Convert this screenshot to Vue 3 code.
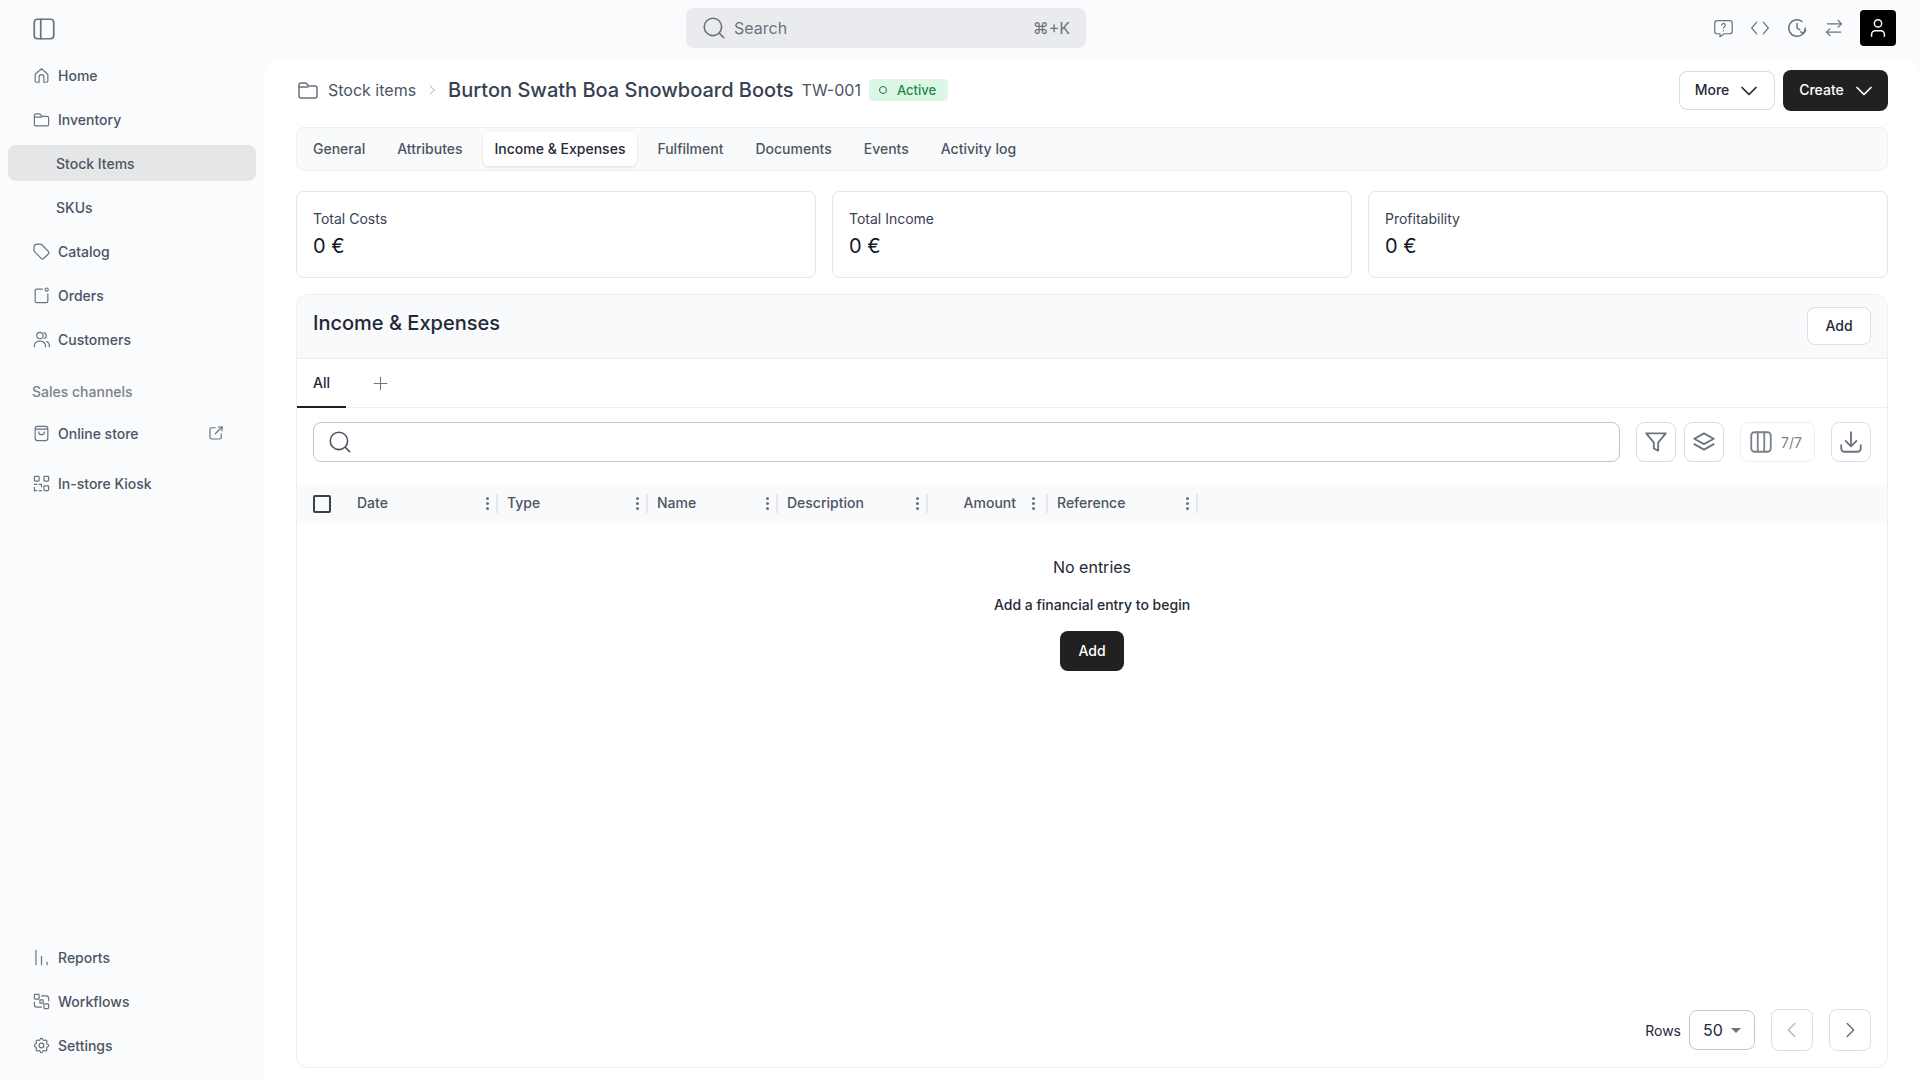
<script setup>
import { h } from 'vue'

// 線アイコンのパス定義 (viewBox 24)
const icons = {
  panel: ['M6 3h12a3 3 0 0 1 3 3v12a3 3 0 0 1-3 3H6a3 3 0 0 1-3-3V6a3 3 0 0 1 3-3z', 'M9 3v18'],
  home: ['M4 10.5 12 3.5l8 7V19a1.5 1.5 0 0 1-1.5 1.5H15V14a3 3 0 0 0-6 0v6.5H5.5A1.5 1.5 0 0 1 4 19z'],
  folder: ['M3 7a2 2 0 0 1 2-2h4.2a2 2 0 0 1 1.5.7L12.5 8H19a2 2 0 0 1 2 2v8a2 2 0 0 1-2 2H5a2 2 0 0 1-2-2z', 'M3 9h9'],
  tag: ['M2.5 6.5v4.2a2 2 0 0 0 .6 1.4l8.8 8.8a2 2 0 0 0 2.8 0l6.1-6.1a2 2 0 0 0 0-2.8L12 3.2a2 2 0 0 0-1.4-.6H6.4a4 4 0 0 0-3.9 3.9z'],
  orders: ['M13 4H6a2 2 0 0 0-2 2v13a2 2 0 0 0 2 2h12a2 2 0 0 0 2-2v-9', 'M18.5 2.5a2 2 0 1 1 0 4 2 2 0 0 1 0-4z'],
  users: ['M10 3a4 4 0 1 1 0 8 4 4 0 0 1 0-8z', 'M3 21v-1a6 6 0 0 1 6-6h2a6 6 0 0 1 6 6v1', 'M15.5 3.3a4 4 0 0 1 0 7.4', 'M22 21v-1a6 6 0 0 0-3.5-5.4'],
  bag: ['M7 3h10a3 3 0 0 1 3 3v12a3 3 0 0 1-3 3H7a3 3 0 0 1-3-3V6a3 3 0 0 1 3-3z', 'M4.5 6.5h15', 'M8.5 10a3.5 3.5 0 0 0 7 0'],
  external: ['M11 5H6a2 2 0 0 0-2 2v11a2 2 0 0 0 2 2h11a2 2 0 0 0 2-2v-5', 'M11 13 20 4', 'M15 4h5v5'],
  qr: ['M4 3h4a1 1 0 0 1 1 1v4a1 1 0 0 1-1 1H4a1 1 0 0 1-1-1V4a1 1 0 0 1 1-1z', 'M16 3h4a1 1 0 0 1 1 1v4a1 1 0 0 1-1 1h-4a1 1 0 0 1-1-1V4a1 1 0 0 1 1-1z', 'M16 15h4a1 1 0 0 1 1 1v4a1 1 0 0 1-1 1h-4a1 1 0 0 1-1-1v-4a1 1 0 0 1 1-1z', 'M3 13h3', 'M9 13h3v3', 'M3 17v4h3', 'M9 21h3'],
  reports: ['M5 3v18', 'M12 11v10', 'M19 18v3'],
  flows: ['M4 3h4a1 1 0 0 1 1 1v4a1 1 0 0 1-1 1H4a1 1 0 0 1-1-1V4a1 1 0 0 1 1-1z', 'M10 10h4v4h-4z', 'M16 15h4a1 1 0 0 1 1 1v4a1 1 0 0 1-1 1h-4a1 1 0 0 1-1-1v-4a1 1 0 0 1 1-1z', 'M12 5h6a3 3 0 0 1 3 3v3', 'M12 19H6a3 3 0 0 1-3-3v-3'],
  gear: ['M10.325 4.317c.426-1.756 2.924-1.756 3.35 0a1.724 1.724 0 0 0 2.573 1.066c1.543-.94 3.31.826 2.37 2.37a1.724 1.724 0 0 0 1.065 2.572c1.756.426 1.756 2.924 0 3.35a1.724 1.724 0 0 0-1.066 2.573c.94 1.543-.826 3.31-2.37 2.37a1.724 1.724 0 0 0-2.572 1.065c-.426 1.756-2.924 1.756-3.35 0a1.724 1.724 0 0 0-2.573-1.066c-1.543.94-3.31-.826-2.37-2.37a1.724 1.724 0 0 0-1.065-2.572c-1.756-.426-1.756-2.924 0-3.35a1.724 1.724 0 0 0 1.066-2.573c-.94-1.543.826-3.31 2.37-2.37 1 .608 2.296.07 2.572-1.065z', 'M12 9a3 3 0 1 1 0 6 3 3 0 0 1 0-6z'],
  search: ['M11 3a8 8 0 1 1 0 16 8 8 0 0 1 0-16z', 'M17 17l4 4'],
  help: ['M5 3h14a3 3 0 0 1 3 3v9a3 3 0 0 1-3 3h-6l-5 3.5V18H5a3 3 0 0 1-3-3V6a3 3 0 0 1 3-3z', 'M10 8.2a2 2 0 1 1 3 1.8c-.7.4-1 .8-1 1.5', 'M12 14.5v.1'],
  code: ['M8 5 2 12l6 7', 'M16 5l6 7-6 7'],
  clock: ['M21 12a9 9 0 1 1-3.5-7.1', 'M12 7v5l3 2', 'M21.5 14.5 19 18l-3-1.8'],
  swap: ['M21 7H4', 'M17 3l4 4-4 4', 'M3 17h17', 'M7 13l-4 4 4 4'],
  user: ['M12 3a4 4 0 1 1 0 8 4 4 0 0 1 0-8z', 'M5 21v-2a4 4 0 0 1 4-4h6a4 4 0 0 1 4 4v2'],
  down: ['M5 8.5l7 7 7-7'],
  right: ['M9 5l7 7-7 7'],
  left: ['M15 5l-7 7 7 7'],
  plus: ['M12 4v16', 'M4 12h16'],
  filter: ['M3 4h18l-7 8.5V20l-4-2v-5.5z'],
  layers: ['M12 4l9 5-9 5-9-5z', 'M3 14l9 5 9-5'],
  columns: ['M6 3h12a3 3 0 0 1 3 3v12a3 3 0 0 1-3 3H6a3 3 0 0 1-3-3V6a3 3 0 0 1 3-3z', 'M9 3v18', 'M15 3v18'],
  download: ['M3 15v3a3 3 0 0 0 3 3h12a3 3 0 0 0 3-3v-3', 'M12 3v12', 'M7 11l5 5 5-5'],
}

// アイコン描画用の小さな関数コンポーネント
const Icon = (props) =>
  h('svg', {
    width: props.size || 16,
    height: props.size || 16,
    viewBox: '0 0 24 24',
    fill: 'none',
    stroke: 'currentColor',
    'stroke-width': props.sw || 1.6,
    'stroke-linecap': 'round',
    'stroke-linejoin': 'round',
  }, icons[props.name].map((d) => h('path', { d })))
Icon.props = ['name', 'size', 'sw']

const mainNav = [
  { label: 'Home', icon: 'home' },
  { label: 'Inventory', icon: 'folder' },
  { label: 'Stock Items', sub: true, active: true },
  { label: 'SKUs', sub: true },
  { label: 'Catalog', icon: 'tag' },
  { label: 'Orders', icon: 'orders' },
  { label: 'Customers', icon: 'users' },
]
const bottomNav = [
  { label: 'Reports', icon: 'reports' },
  { label: 'Workflows', icon: 'flows' },
  { label: 'Settings', icon: 'gear' },
]
const tabs = ['General', 'Attributes', 'Income & Expenses', 'Fulfilment', 'Documents', 'Events', 'Activity log']
const stats = ['Total Costs', 'Total Income', 'Profitability']
const columns = [
  { label: 'Date', width: 150 },
  { label: 'Type', width: 150 },
  { label: 'Name', width: 130 },
  { label: 'Description', width: 150 },
  { label: 'Amount', width: 120, right: true },
  { label: 'Reference', width: 150 },
]
</script>

<template>
  <div class="app">
    <aside class="sidebar">
      <div class="toggle"><Icon name="panel" :size="26" /></div>
      <nav class="nav">
        <a v-for="item in mainNav" :key="item.label" class="nav-item" :class="{ sub: item.sub, active: item.active }">
          <Icon v-if="item.icon" :name="item.icon" :size="19" :sw="1.5" />
          <span>{{ item.label }}</span>
        </a>
      </nav>
      <div class="nav-title">Sales channels</div>
      <a class="nav-item">
        <Icon name="bag" :size="19" :sw="1.5" />
        <span>Online store</span>
        <Icon class="ext" name="external" :size="18" />
      </a>
      <a class="nav-item kiosk">
        <Icon name="qr" :size="19" :sw="1.5" />
        <span>In-store Kiosk</span>
      </a>
      <nav class="nav bottom">
        <a v-for="item in bottomNav" :key="item.label" class="nav-item">
          <Icon :name="item.icon" :size="19" :sw="1.5" />
          <span>{{ item.label }}</span>
        </a>
      </nav>
    </aside>

    <div class="main">
      <header class="topbar">
        <div class="global-search">
          <Icon name="search" :size="26" :sw="1.5" />
          <span class="gs-text">Search</span>
          <span class="gs-key">⌘+K</span>
        </div>
        <div class="top-actions">
          <Icon name="help" :size="21" :sw="1.4" />
          <Icon name="code" :size="20" :sw="1.4" />
          <Icon name="clock" :size="22" :sw="1.6" />
          <Icon name="swap" :size="20" :sw="1.5" />
          <div class="avatar"><Icon name="user" :size="22" /></div>
        </div>
      </header>

      <main class="panel">
        <div class="page-head">
          <Icon class="crumb-icon" name="folder" :size="24" :sw="1.5" />
          <span class="crumb">Stock items</span>
          <Icon class="crumb-sep" name="right" :size="14" />
          <h1 class="title">Burton Swath Boa Snowboard Boots</h1>
          <span class="code">TW-001</span>
          <span class="badge"><i class="dot"></i>Active</span>
          <div class="head-btns">
            <button class="btn more">More <Icon name="down" :size="24" :sw="1.7" /></button>
            <button class="btn create">Create <Icon name="down" :size="24" :sw="1.7" /></button>
          </div>
        </div>

        <div class="tabs">
          <span v-for="t in tabs" :key="t" class="tab" :class="{ on: t === 'Income & Expenses' }">{{ t }}</span>
        </div>

        <div class="stats">
          <div v-for="s in stats" :key="s" class="stat">
            <div class="stat-label">{{ s }}</div>
            <div class="stat-value">0 €</div>
          </div>
        </div>

        <section class="card">
          <div class="card-head">
            <h2>Income &amp; Expenses</h2>
            <button class="btn add-out">Add</button>
          </div>
          <div class="view-tabs">
            <span class="view on">All</span>
            <Icon class="view-plus" name="plus" :size="19" :sw="1.3" />
          </div>
          <div class="toolbar">
            <div class="tool-search"><Icon name="search" :size="26" :sw="1.5" /></div>
            <button class="tool first"><Icon name="filter" :size="26" :sw="1.7" /></button>
            <button class="tool"><Icon name="layers" :size="26" :sw="1.7" /></button>
            <button class="tool cols"><Icon name="columns" :size="26" :sw="1.7" /><span>7/7</span></button>
            <button class="tool"><Icon name="download" :size="26" :sw="1.7" /></button>
          </div>

          <div class="thead">
            <div class="check-col"><span class="check"></span></div>
            <div
              v-for="c in columns"
              :key="c.label"
              class="th"
              :class="{ right: c.right }"
              :style="{ width: c.width + 'px' }"
            >
              <span class="th-label">{{ c.label }}</span>
              <span class="kebab"><i></i><i></i><i></i></span>
            </div>
          </div>

          <div class="empty">
            <div class="empty-title">No entries</div>
            <div class="empty-sub">Add a financial entry to begin</div>
            <button class="btn add-solid">Add</button>
          </div>

          <div class="pager">
            <span class="rows">Rows</span>
            <div class="select">50<i class="caret"></i></div>
            <button class="page-btn off"><Icon name="left" :size="22" /></button>
            <button class="page-btn"><Icon name="right" :size="22" /></button>
          </div>
        </section>
      </main>
    </div>
  </div>
</template>

<style>
html, body {
  margin: 0;
  background: #f9fbfd;
}
</style>

<style scoped>
.app {
  display: flex;
  height: 1080px;
  overflow: hidden;
  font-family: Inter, "Noto Sans", "DejaVu Sans", sans-serif;
  font-size: 14px;
  color: #1f2937;
  background: #f9fbfd;
}
button {
  font-family: inherit;
  cursor: pointer;
}

/* サイドバー */
.sidebar {
  width: 264px;
  flex: none;
  display: flex;
  flex-direction: column;
  box-sizing: border-box;
  padding: 0 8px 17px;
  color: #4b5563;
}
.toggle {
  height: 57px;
  display: flex;
  align-items: center;
  padding-left: 23px;
  color: #6b7280;
}
.nav {
  display: flex;
  flex-direction: column;
  gap: 8px;
}
.nav.bottom {
  margin-top: auto;
}
.nav-item {
  height: 36px;
  display: flex;
  align-items: center;
  gap: 7px;
  padding-left: 24px;
  border-radius: 8px;
  font-weight: 500;
  font-size: 14px;
  box-sizing: border-box;
}
.nav-item svg {
  color: #6b7280;
  flex: none;
}
.nav-item.sub {
  padding-left: 48px;
}
.nav-item.active {
  background: #e5e6e7;
}
.nav-item .ext {
  margin-left: auto;
  margin-right: 31px;
}
.kiosk {
  margin-top: 14px;
}
.nav-title {
  margin: 25px 0 13px 24px;
  height: 20px;
  line-height: 20px;
  color: #7b818c;
  font-weight: 500;
}

/* トップバー */
.main {
  flex: 1;
  min-width: 0;
  display: flex;
  flex-direction: column;
}
.topbar {
  height: 58px;
  flex: none;
  display: flex;
  align-items: flex-start;
  justify-content: space-between;
  box-sizing: border-box;
  padding: 8px 24px 0 422px;
}
.global-search {
  width: 400px;
  height: 40px;
  display: flex;
  align-items: center;
  box-sizing: border-box;
  padding: 0 16px 0 15px;
  border-radius: 8px;
  background: #e9ebee;
  color: #6b7280;
  font-size: 16px;
}
.gs-text {
  margin-left: 7px;
}
.gs-key {
  margin-left: auto;
}
.top-actions {
  display: flex;
  align-items: center;
  gap: 16px;
  margin-top: 2px;
  color: #6b7280;
}
.avatar {
  width: 36px;
  height: 36px;
  border-radius: 4px;
  background: #000;
  color: #fff;
  display: flex;
  align-items: center;
  justify-content: center;
}

/* メインパネル */
.panel {
  flex: 1;
  min-height: 0;
  display: flex;
  flex-direction: column;
  background: #fff;
  border-radius: 16px 16px 0 0;
  padding: 12px 32px;
  box-sizing: border-box;
}
.page-head {
  height: 41px;
  flex: none;
  display: flex;
  align-items: center;
  box-sizing: border-box;
  padding-bottom: 2px;
  font-size: 16px;
}
.crumb-icon {
  color: #6b7280;
}
.crumb {
  margin-left: 8px;
  color: #4b5563;
}
.crumb-sep {
  margin: 0 9px;
  color: #9ca3af;
}
.title {
  margin: 0;
  font-size: 20px;
  font-weight: 500;
  color: #374151;
}
.code {
  margin-left: 8px;
  color: #4b5563;
}
.badge {
  margin-left: 8px;
  height: 22px;
  display: flex;
  align-items: center;
  gap: 10px;
  padding: 0 12px 0 10px;
  border-radius: 4px;
  background: #dcf7e6;
  color: #1c8a47;
  font-size: 13px;
  font-weight: 500;
}
.dot {
  width: 8px;
  height: 8px;
  box-sizing: border-box;
  border: 1.3px solid #15803d;
  border-radius: 50%;
}
.head-btns {
  margin-left: auto;
  margin-bottom: -2px;
  display: flex;
  align-items: center;
  gap: 8px;
}
.btn {
  display: inline-flex;
  align-items: center;
  justify-content: center;
  border-radius: 8px;
  font-size: 14px;
  font-weight: 500;
  padding: 0 0 1px;
}
.more {
  width: 96px;
  height: 39px;
  gap: 8px;
  padding: 0 0 2px 2px;
  background: #fff;
  border: 1px solid #d9dbde;
  color: #1f2937;
}
.create {
  width: 105px;
  height: 41px;
  gap: 8px;
  padding: 0 0 2px 4px;
  background: #212121;
  border: 0;
  color: #fff;
}
.more svg,
.create svg {
  margin-bottom: -2px;
}

.tabs {
  flex: none;
  height: 44px;
  margin-top: 16px;
  display: flex;
  align-items: center;
  gap: 8px;
  padding: 0 4px;
  box-sizing: border-box;
  background: #f9fafb;
  border: 1px solid #eceef0;
  border-radius: 8px;
}
.tab {
  height: 34px;
  line-height: 34px;
  padding: 0 12px;
  border-radius: 6px;
  font-weight: 500;
  color: #4b5563;
}
.tab.on {
  background: #fff;
  color: #1f2937;
  box-shadow: 0 1px 3px rgba(0, 0, 0, 0.12);
}

.stats {
  flex: none;
  margin-top: 20px;
  display: grid;
  grid-template-columns: repeat(3, 1fr);
  gap: 16px;
}
.stat {
  height: 87px;
  box-sizing: border-box;
  padding: 17px 16px 0;
  background: #fff;
  border: 1px solid #e5e7eb;
  border-radius: 8px;
}
.stat-label {
  line-height: 20px;
  color: #374151;
}
.stat-value {
  margin-top: 4px;
  font-size: 20px;
  font-weight: 400;
  line-height: 26px;
  color: #111827;
}

/* テーブルカード */
.card {
  flex: 1;
  min-height: 0;
  margin-top: 16px;
  display: flex;
  flex-direction: column;
  border: 1px solid #eceef0;
  border-radius: 12px;
  overflow: hidden;
}
.card-head {
  flex: none;
  height: 64px;
  display: flex;
  align-items: flex-start;
  justify-content: space-between;
  box-sizing: border-box;
  padding: 12px 16px 0;
  background: #f9fafb;
  border-bottom: 1px solid #eceef0;
}
.card-head h2 {
  margin: 2px 0 0;
  font-size: 20px;
  font-weight: 500;
  line-height: 28px;
  color: #1f2937;
}
.add-out {
  width: 64px;
  height: 38px;
  background: #fff;
  border: 1px solid #dcdee1;
  color: #1f2937;
}
.view-tabs {
  flex: none;
  height: 49px;
  display: flex;
  align-items: stretch;
  box-sizing: border-box;
  border-bottom: 1px solid #eceef0;
}
.view {
  width: 49px;
  box-sizing: border-box;
  padding-left: 16px;
  line-height: 48px;
  font-weight: 500;
  color: #1f2937;
}
.view.on {
  height: 49px;
  border-bottom: 2px solid #1f1f1f;
}
.view-plus {
  margin: 15px 0 0 25px;
  color: #6b7280;
}
.toolbar {
  flex: none;
  display: flex;
  align-items: center;
  gap: 8px;
  padding: 14px 16px 0;
}
.tool-search {
  flex: 1;
  height: 40px;
  display: flex;
  align-items: center;
  box-sizing: border-box;
  padding-left: 13px;
  border: 1px solid #c4c6c9;
  border-radius: 8px;
  color: #4b5563;
}
.tool {
  width: 40px;
  height: 40px;
  flex: none;
  display: flex;
  align-items: center;
  justify-content: center;
  padding: 0;
  background: #fff;
  border: 1px solid #dcdee1;
  border-radius: 8px;
  color: #6b7280;
}
.tool.first {
  margin-left: 8px;
}
.tool.cols {
  width: 75px;
  margin: 0 8px;
  gap: 7px;
  justify-content: flex-start;
  padding-left: 7px;
  border-color: #eceef0;
  font-size: 14px;
  font-weight: 400;
  color: #7b818c;
}
.thead {
  flex: none;
  height: 39px;
  margin-top: 22px;
  display: flex;
  align-items: center;
  background: #f9fafb;
}
.check-col {
  width: 51px;
  flex: none;
  padding-left: 16px;
  box-sizing: border-box;
}
.check {
  display: block;
  width: 18px;
  height: 18px;
  box-sizing: border-box;
  border: 2px solid #374151;
  border-radius: 2px;
}
.th {
  height: 19px;
  flex: none;
  display: flex;
  align-items: center;
  box-sizing: border-box;
  padding: 0 7px 0 9px;
  border-right: 2px solid #e5e7eb;
  color: #4b5563;
  font-weight: 500;
}
.th-label {
  margin-bottom: 2px;
}
.th.right .th-label {
  margin-left: auto;
}
.th.right .kebab {
  margin-left: 16px;
  margin-right: 4px;
}
.kebab {
  margin-left: auto;
  display: flex;
  flex-direction: column;
  gap: 2px;
}
.kebab i {
  display: block;
  width: 3px;
  height: 3px;
  border-radius: 50%;
  background: #6b7280;
}

.empty {
  display: flex;
  flex-direction: column;
  align-items: center;
}
.empty-title {
  margin-top: 32px;
  font-size: 16px;
  line-height: 24px;
  color: #1f2937;
}
.empty-sub {
  margin-top: 16px;
  font-weight: 500;
  line-height: 20px;
  color: #1f2937;
}
.add-solid {
  width: 64px;
  height: 40px;
  margin-top: 16px;
  background: #212121;
  border: 0;
  color: #fff;
}
.pager {
  margin-top: auto;
  display: flex;
  align-items: center;
  justify-content: flex-end;
  height: 42px;
  padding: 0 16px 16px;
}
.rows {
  margin-right: 8px;
  color: #1f2937;
}
.select {
  width: 66px;
  height: 40px;
  box-sizing: border-box;
  display: flex;
  align-items: center;
  padding-left: 13px;
  border: 1px solid #c4c6c9;
  border-radius: 8px;
  font-size: 16px;
  font-weight: 400;
  color: #1f2937;
}
.caret {
  margin-left: 8px;
  border-left: 5px solid transparent;
  border-right: 5px solid transparent;
  border-top: 5px solid #6b7280;
}
.page-btn {
  width: 42px;
  height: 42px;
  margin-left: 16px;
  display: flex;
  align-items: center;
  justify-content: center;
  padding: 0;
  background: #fff;
  border: 1px solid #dcdee1;
  border-radius: 8px;
  color: #6b7280;
}
.page-btn.off {
  color: #b8bbc0;
}
</style>
